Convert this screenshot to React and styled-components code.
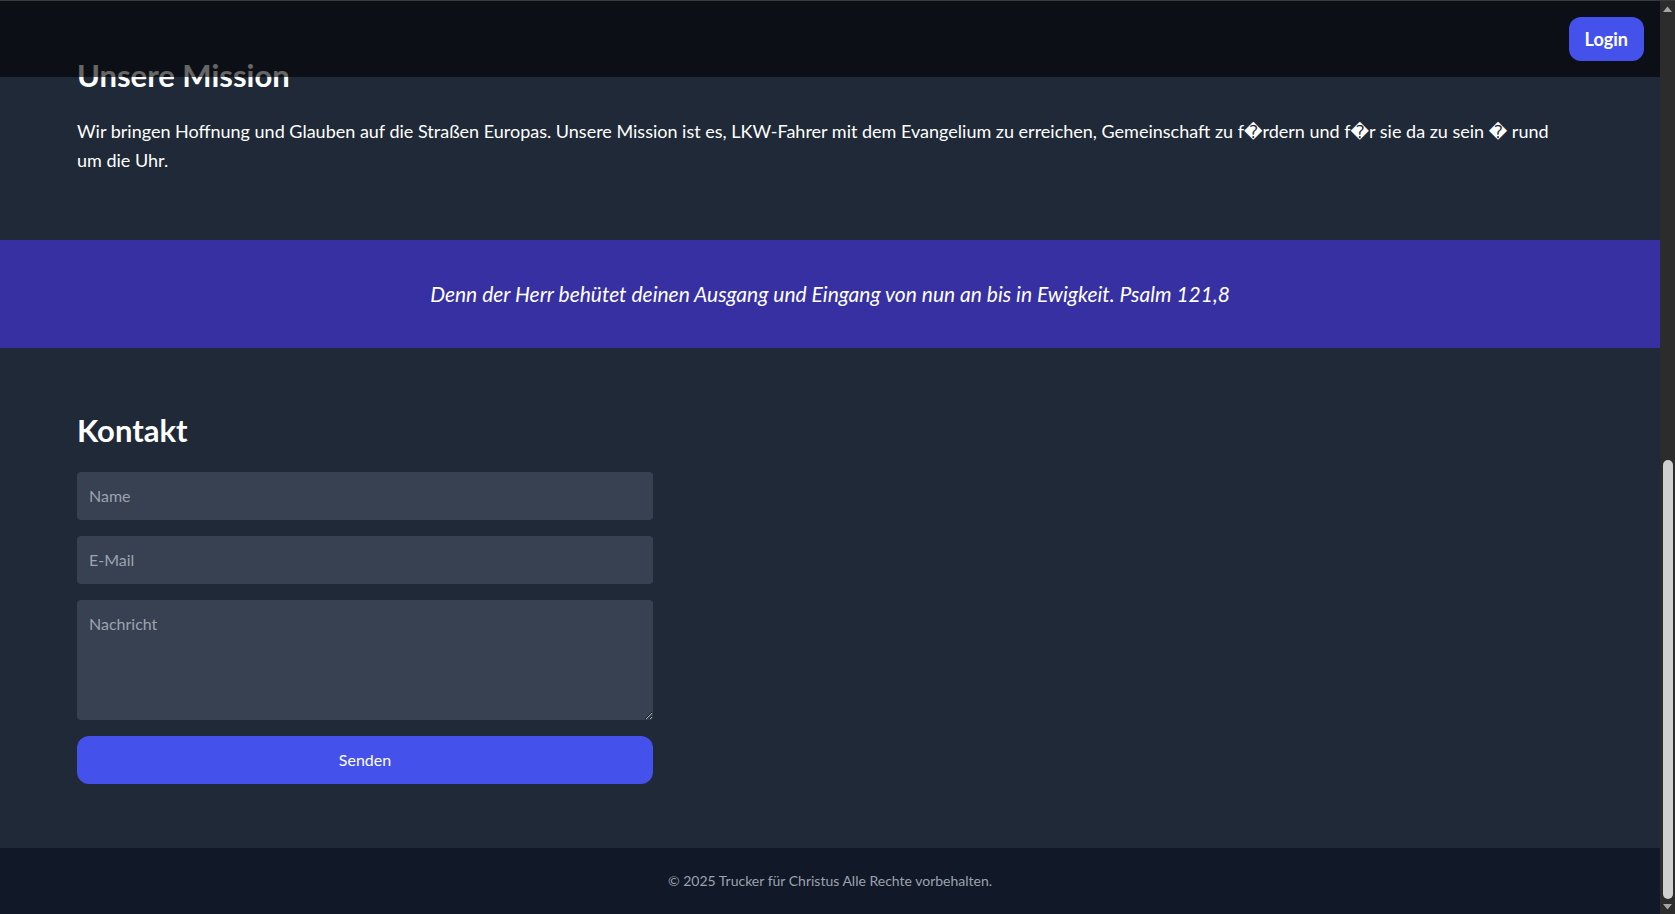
import React, { useLayoutEffect, useRef, useState } from 'react';
import styled, { createGlobalStyle } from 'styled-components';

const GlobalStyle = createGlobalStyle`
  html, body, #root { height: 100%; }
  html { background: #111827; }
  body {
    margin: 0;
    overflow: hidden;
    font-family: Lato, "Segoe UI", "DejaVu Sans", sans-serif;
    background: #1f2937;
    color: #ffffff;
  }
  *, *::before, *::after { box-sizing: border-box; }
`;

const Shell = styled.div`
  display: flex;
  height: 100vh;
  border-top: 1px solid #3a3a3a;
`;

const Page = styled.div`
  flex: 1;
  min-width: 0;
  height: 100%;
  overflow-y: scroll;
  overflow-x: hidden;
  scrollbar-width: none;
  &::-webkit-scrollbar { display: none; }
`;

const ScrollRail = styled.div`
  width: 15px;
  flex: none;
  background: #2c2c2c;
  display: flex;
  flex-direction: column;
`;

const RailArrow = styled.div`
  height: 15px;
  flex: none;
  display: flex;
  align-items: center;
  justify-content: center;
`;

const RailTrack = styled.div`
  flex: 1;
  display: flex;
  flex-direction: column;
  justify-content: flex-end;
  padding: 0 2px 0 3px;
`;

const RailThumb = styled.div`
  width: 100%;
  border-radius: 5px;
  background: #d0d0d0;
`;

const Header = styled.header`
  position: fixed;
  top: 1px;
  left: 0;
  right: 15px;
  z-index: 10;
  height: 76px;
  background: rgba(0, 0, 0, 0.6);
  display: flex;
  align-items: center;
  justify-content: flex-end;
  padding: 0 16px;
`;

const LoginButton = styled.button`
  font-family: inherit;
  background: #4451ea;
  color: #ffffff;
  font-weight: 700;
  font-size: 18px;
  line-height: 24px;
  padding: 10px 16px;
  border: none;
  border-radius: 12px;
  cursor: pointer;
`;

const Hero = styled.section`
  height: 100vh;
  background: #111827;
  display: flex;
  flex-direction: column;
  align-items: center;
  justify-content: center;
  gap: 16px;
  text-align: center;
`;

const HeroTitle = styled.h1`
  margin: 0;
  font-size: 48px;
  font-weight: 700;
`;

const HeroText = styled.p`
  margin: 0;
  font-size: 20px;
  color: #d1d5db;
`;

const Section = styled.section`
  background: #1f2937;
  padding: 64px 0;
`;

const Container = styled.div`
  max-width: 1536px;
  margin: 0 auto;
  padding: 0 15px;
`;

const Heading = styled.h2`
  margin: 0 0 24px;
  font-size: 31px;
  line-height: 36px;
  font-weight: 700;
`;

const Paragraph = styled.p`
  margin: 0;
  max-width: 1485px;
  font-size: 18px;
  line-height: 29.25px;
`;

const QuoteBand = styled.section`
  background: #3730a3;
  padding: 40px 16px;
  text-align: center;
`;

const Quote = styled.blockquote`
  margin: 0;
  font-size: 21px;
  line-height: 28px;
  font-style: italic;
`;

const Form = styled.form`
  max-width: 576px;
  display: flex;
  flex-direction: column;
  gap: 16px;
`;

const fieldStyles = `
  display: block;
  width: 100%;
  font-family: inherit;
  font-size: 16px;
  line-height: 24px;
  color: #ffffff;
  background: #374151;
  border: none;
  border-radius: 4px;
  padding: 12px;
  outline: none;
  &::placeholder { color: #9ca3af; }
`;

const Input = styled.input`
  ${fieldStyles}
`;

const TextArea = styled.textarea`
  ${fieldStyles}
  height: 120px;
  resize: vertical;
`;

const SubmitButton = styled.button`
  font-family: inherit;
  font-size: 16px;
  line-height: 24px;
  color: #ffffff;
  background: #4451ea;
  border: none;
  border-radius: 12px;
  padding: 12px;
  cursor: pointer;
`;

const Footer = styled.footer`
  background: #111827;
  padding: 23px 16px;
  text-align: center;
  color: #9ca3af;
  font-size: 14px;
  line-height: 20px;
`;

function Arrow({ down }) {
  return (
    <svg width="9" height="6" viewBox="0 0 9 6" aria-hidden="true">
      <path d={down ? 'M0 0 L9 0 L4.5 5.5 Z' : 'M0 6 L9 6 L4.5 0.5 Z'} fill="#a5a5a5" />
    </svg>
  );
}

export default function App() {
  const pageRef = useRef(null);
  const [thumb, setThumb] = useState(0.5);

  useLayoutEffect(() => {
    const el = pageRef.current;
    if (!el) return undefined;
    const sync = () => {
      el.scrollTop = el.scrollHeight;
      setThumb(el.clientHeight / el.scrollHeight);
    };
    sync();
    const id = requestAnimationFrame(sync);
    return () => cancelAnimationFrame(id);
  }, []);

  return (
    <>
      <GlobalStyle />
      <Shell>
        <Page ref={pageRef}>
          <Header>
            <LoginButton type="button">Login</LoginButton>
          </Header>
          <Hero>
            <HeroTitle>Trucker für Christus</HeroTitle>
            <HeroText>Hoffnung und Glauben für die Straßen Europas</HeroText>
          </Hero>
          <Section>
            <Container>
              <Heading>Unsere Mission</Heading>
              <Paragraph>
                Wir bringen Hoffnung und Glauben auf die Straßen Europas. Unsere Mission ist es,
                LKW-Fahrer mit dem Evangelium zu erreichen, Gemeinschaft zu f{'\uFFFD'}rdern und
                f{'\uFFFD'}r sie da zu sein {'\uFFFD'} rund um die Uhr.
              </Paragraph>
            </Container>
          </Section>
          <QuoteBand>
            <Quote>
              Denn der Herr behütet deinen Ausgang und Eingang von nun an bis in Ewigkeit. Psalm 121,8
            </Quote>
          </QuoteBand>
          <Section>
            <Container>
              <Heading>Kontakt</Heading>
              <Form onSubmit={(e) => e.preventDefault()}>
                <Input type="text" placeholder="Name" />
                <Input type="email" placeholder="E-Mail" />
                <TextArea placeholder="Nachricht" rows={4} />
                <SubmitButton type="submit">Senden</SubmitButton>
              </Form>
            </Container>
          </Section>
          <Footer>© 2025 Trucker für Christus Alle Rechte vorbehalten.</Footer>
        </Page>
        <ScrollRail aria-hidden="true">
          <RailArrow>
            <Arrow />
          </RailArrow>
          <RailTrack>
            <RailThumb style={{ height: `${thumb * 100}%` }} />
          </RailTrack>
          <RailArrow>
            <Arrow down />
          </RailArrow>
        </ScrollRail>
      </Shell>
    </>
  );
}
